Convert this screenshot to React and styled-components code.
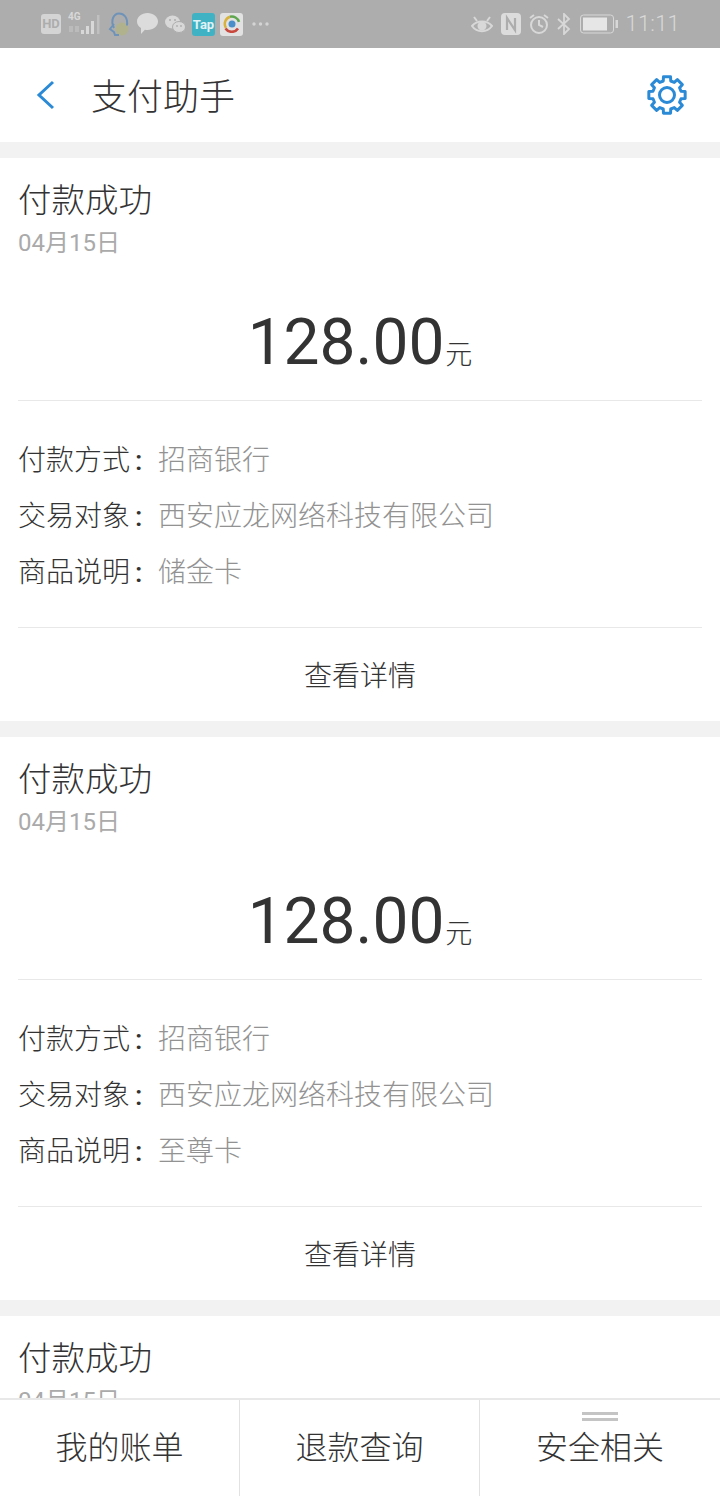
import React from 'react';
import styled, { createGlobalStyle } from 'styled-components';

const GlobalStyle = createGlobalStyle`
  html, body {
    margin: 0;
    padding: 0;
    background: #f2f2f2;
    font-family: Roboto, "Noto Sans CJK SC", sans-serif;
    font-weight: 300;
    color: #333;
  }
`;

const Page = styled.div`
  position: relative;
  width: 720px;
  height: 1496px;
  overflow: hidden;
  background: #f2f2f2;
`;

const StatusBar = styled.div`
  height: 48px;
  background: #adadad;
  display: flex;
  align-items: center;
  justify-content: space-between;
  padding: 0 40px 0 41px;
`;

const StatusGroup = styled.div`
  display: flex;
  align-items: center;
`;

const StatusIcon = styled.svg`
  display: block;
  flex-shrink: 0;
  margin-left: ${props => props.$ml || 0}px;
`;

const HdBadge = styled.span`
  width: 20px;
  height: 20px;
  border-radius: 3px;
  background: #d4d4d4;
  color: #adadad;
  font: 700 13px/20px Roboto, sans-serif;
  text-align: center;
`;

const Signal = styled.div`
  position: relative;
  width: 34px;
  height: 24px;
  margin-left: 7px;
`;

const SignalLabel = styled.span`
  position: absolute;
  left: 0;
  top: -1px;
  color: #d8d8d8;
  font: 700 10px/12px Roboto, sans-serif;
`;

const TapBadge = styled.span`
  width: 23px;
  height: 23px;
  margin-left: 7px;
  border-radius: 3px;
  background: #3fb2c4;
  color: #e0f2f5;
  font: 700 13px/23px Roboto, sans-serif;
  text-align: center;
`;

const TencentBadge = styled.span`
  width: 23px;
  height: 23px;
  margin-left: 5px;
  border-radius: 3px;
  background: #e2e2e2;
  display: flex;
  align-items: center;
  justify-content: center;
`;

const Clock = styled.span`
  color: #d8d8d8;
  font: 300 22px/48px Roboto, sans-serif;
  letter-spacing: 0.2px;
  margin-left: 8px;
`;

const Header = styled.header`
  height: 94px;
  background: #fff;
  display: flex;
  align-items: center;
  padding: 0 32px 0 36px;
`;

const BackIcon = styled.svg`
  width: 20px;
  height: 30px;
  margin-right: 35px;
`;

const HeaderTitle = styled.h1`
  flex: 1;
  margin: 6px 0 0;
  font-size: 36px;
  font-weight: 300;
  color: #333;
  line-height: 88px;
`;

const Feed = styled.div`
  display: flex;
  flex-direction: column;
  gap: 16px;
  padding-top: 16px;
`;

const Card = styled.section`
  background: #fff;
  height: 563px;
  padding: 0 18px;
  box-sizing: border-box;
  flex-shrink: 0;
`;

const CardTitle = styled.div`
  padding-top: 18px;
  font-size: 33.5px;
  line-height: 50px;
  color: #333;
`;

const CardDate = styled.div`
  font-size: 24px;
  font-weight: 400;
  line-height: 34px;
  color: #aaa;
`;

const Amount = styled.div`
  height: 117px;
  margin-top: 24px;
  padding-top: 9px;
  box-sizing: border-box;
  border-bottom: 1px solid #e8e8e8;
  display: flex;
  justify-content: center;
  align-items: baseline;
  font-size: 64px;
  font-weight: 400;
  line-height: 100px;
  color: #333;
`;

const Unit = styled.span`
  font-size: 27px;
  font-weight: 300;
  margin-left: 1px;
`;

const Details = styled.div`
  height: 227px;
  box-sizing: border-box;
  padding-top: 32px;
  border-bottom: 1px solid #e8e8e8;
`;

const DetailRow = styled.div`
  display: flex;
  height: 56px;
  font-size: 28px;
  line-height: 56px;
`;

const DetailLabel = styled.span`
  width: 140px;
  color: #333;
`;

const Colon = styled.span`
  margin-left: 5px;
  font-weight: 500;
`;

const DetailValue = styled.span`
  color: #929292;
`;

const DetailLink = styled.div`
  height: 93px;
  text-align: center;
  font-size: 28px;
  line-height: 98px;
  color: #333;
`;

const TabBar = styled.nav`
  position: absolute;
  left: 0;
  right: 0;
  bottom: 0;
  height: 98px;
  background: #fff;
  border-top: 2px solid #e8e8e8;
  box-sizing: border-box;
  display: grid;
  grid-template-columns: 240px 240px 240px;
`;

const Tab = styled.div`
  position: relative;
  box-sizing: border-box;
  text-align: center;
  font-size: 32px;
  line-height: 96px;
  color: #333;
  border-right: ${props => (props.$last ? 'none' : '1px solid #e2e2e2')};
`;

const TabHandle = styled.span`
  position: absolute;
  left: 102px;
  top: 12px;
  width: 36px;
  height: 9px;
  box-sizing: border-box;
  border-top: 3px solid #c4c4c4;
  border-bottom: 3px solid #c4c4c4;
`;

const payments = [
  { id: 1, product: '储金卡' },
  { id: 2, product: '至尊卡' },
];

// 톱니 8개짜리 기어 path
function gearPath(cx, cy, tip, root) {
  let d = '';
  for (let i = 0; i < 8; i++) {
    const a = i * 45 - 90;
    const pts = [[root, a - 15], [tip, a - 11], [tip, a + 11], [root, a + 15]];
    pts.forEach(([r, deg], j) => {
      const rad = (deg * Math.PI) / 180;
      const x = (cx + r * Math.cos(rad)).toFixed(2);
      const y = (cy + r * Math.sin(rad)).toFixed(2);
      d += `${i === 0 && j === 0 ? 'M' : 'L'}${x} ${y}`;
    });
  }
  return d + 'Z';
}

function PaymentCard({ product }) {
  return (
    <Card>
      <CardTitle>付款成功</CardTitle>
      <CardDate>04月15日</CardDate>
      <Amount>128.00<Unit>元</Unit></Amount>
      <Details>
        <DetailRow><DetailLabel>付款方式<Colon>:</Colon></DetailLabel><DetailValue>招商银行</DetailValue></DetailRow>
        <DetailRow><DetailLabel>交易对象<Colon>:</Colon></DetailLabel><DetailValue>西安应龙网络科技有限公司</DetailValue></DetailRow>
        <DetailRow><DetailLabel>商品说明<Colon>:</Colon></DetailLabel><DetailValue>{product}</DetailValue></DetailRow>
      </Details>
      <DetailLink>查看详情</DetailLink>
    </Card>
  );
}

export default function App() {
  return (
    <Page>
      <GlobalStyle />
      <StatusBar>
        <StatusGroup>
          <HdBadge>HD</HdBadge>
          <Signal>
            <SignalLabel>4G</SignalLabel>
            <svg width="34" height="24" viewBox="0 0 34 24" fill="#d8d8d8">
              <rect x="1" y="14" width="4" height="6" opacity=".35" />
              <rect x="7" y="14" width="4" height="6" opacity=".35" />
              <rect x="13" y="18" width="3" height="4" />
              <rect x="18" y="14" width="3" height="8" />
              <rect x="23" y="9" width="3" height="13" />
              <rect x="29" y="3" width="2.5" height="19" opacity=".45" />
            </svg>
          </Signal>
          <StatusIcon $ml={6} width="22" height="24" viewBox="0 0 22 24" fill="none">
            <circle cx="14" cy="17" r="6.5" fill="#b0b28e" />
            <path d="M6 16C2 8 6 1.500 11 1.500s9 4 8 12" stroke="#6f93b8" strokeWidth="2" />
            <path d="M6 12l-4 5 4 3 1 3h4" stroke="#6f93b8" strokeWidth="2" />
          </StatusIcon>
          <StatusIcon $ml={7} width="21" height="22" viewBox="0 0 21 22" fill="#dcdcdc">
            <path d="M10.500 0C16.300 0 21 3.700 21 8.500S16.300 17 10.500 17c-.9 0-1.800-.1-2.600-.3L4 21v-6C1.600 13.500 0 11.200 0 8.500 0 3.700 4.700 0 10.500 0z" />
          </StatusIcon>
          <StatusIcon $ml={7} width="20" height="18" viewBox="0 0 20 18" fill="#d8d8d8">
            <ellipse cx="7.500" cy="7" rx="7.500" ry="6.500" />
            <ellipse cx="14" cy="12" rx="6.500" ry="5.500" stroke="#adadad" />
            <circle cx="5" cy="5" r="1" fill="#adadad" />
            <circle cx="10" cy="5" r="1" fill="#adadad" />
            <circle cx="12" cy="11" r=".9" fill="#adadad" />
            <circle cx="16" cy="11" r=".9" fill="#adadad" />
          </StatusIcon>
          <TapBadge>Tap</TapBadge>
          <TencentBadge>
            <svg width="18" height="18" viewBox="0 0 18 18" fill="none" strokeWidth="2.500">
              <path d="M3 13A7.500 7.500 0 0 1 7 1.800" stroke="#d8b23c" />
              <path d="M7 1.800a7.500 7.500 0 0 1 9 5" stroke="#5da64f" />
              <path d="M2.500 13.500a7.500 7.500 0 0 0 12.500 0" stroke="#c9483e" />
              <circle cx="9" cy="9" r="3.500" fill="#4a8fc9" />
            </svg>
          </TencentBadge>
          <StatusIcon $ml={9} width="17" height="4" viewBox="0 0 17 4" fill="#d4d4d4">
            <circle cx="2" cy="2" r="1.700" />
            <circle cx="8.500" cy="2" r="1.700" />
            <circle cx="15" cy="2" r="1.700" />
          </StatusIcon>
        </StatusGroup>
        <StatusGroup>
          <StatusIcon width="22" height="20" viewBox="0 0 22 20" fill="none" stroke="#d8d8d8" strokeWidth="2">
            <path d="M1 12c5-6 15-6 20 0-5 7-15 7-20 0z" />
            <circle cx="11" cy="12" r="3.500" fill="#d8d8d8" />
            <path d="M3 3l3 4M19 3l-3 4" />
          </StatusIcon>
          <StatusIcon $ml={8} width="20" height="22" viewBox="0 0 20 22">
            <rect width="20" height="22" rx="4" fill="#dcdcdc" />
            <path d="M6 17V5l8 12V5" fill="none" stroke="#adadad" strokeWidth="2.200" />
          </StatusIcon>
          <StatusIcon $ml={8} width="20" height="22" viewBox="0 0 20 22" fill="none" stroke="#d8d8d8" strokeWidth="2">
            <circle cx="10" cy="12" r="8" />
            <path d="M10 7v5l4 2M1 5l4-3M19 5l-4-3" />
          </StatusIcon>
          <StatusIcon $ml={8} width="14" height="22" viewBox="0 0 14 22" fill="none" stroke="#d8d8d8" strokeWidth="1.800">
            <path d="M1 6l11 10-5 5V1l5 5L1 16" />
          </StatusIcon>
          <StatusIcon $ml={9} width="38" height="20" viewBox="0 0 38 20">
            <rect x=".5" y="1" width="33" height="18" rx="3" fill="none" stroke="#d8d8d8" />
            <rect x="3" y="3.500" width="24" height="13" fill="#e6e6e6" />
            <rect x="35.500" y="6" width="2.500" height="8" fill="#d8d8d8" />
          </StatusIcon>
          <Clock>11:11</Clock>
        </StatusGroup>
      </StatusBar>
      <Header>
        <BackIcon viewBox="0 0 20 30" fill="none" stroke="#2b8ad6" strokeWidth="3">
          <path d="M17 2L3 15l14 13" />
        </BackIcon>
        <HeaderTitle>支付助手</HeaderTitle>
        <svg width="42" height="42" viewBox="0 0 42 42" fill="none" stroke="#2b8ad6" strokeWidth="3" strokeLinejoin="round">
          <path d={gearPath(21, 21, 18.5, 14.5)} />
          <circle cx="21" cy="21" r="7.5" />
        </svg>
      </Header>
      <Feed>
        {payments.map((p) => (
          <PaymentCard key={p.id} product={p.product} />
        ))}
        <Card>
          <CardTitle>付款成功</CardTitle>
          <CardDate>04月15日</CardDate>
        </Card>
      </Feed>
      <TabBar>
        <Tab>我的账单</Tab>
        <Tab>退款查询</Tab>
        <Tab $last><TabHandle />安全相关</Tab>
      </TabBar>
    </Page>
  );
}
